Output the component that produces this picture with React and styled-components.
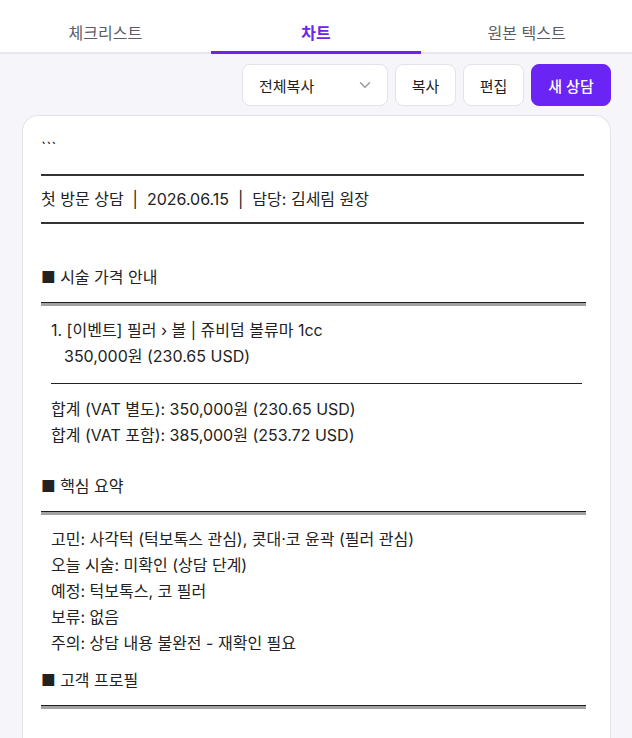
import React from 'react';
import styled, { createGlobalStyle } from 'styled-components';
import { ChevronDown } from 'lucide-react';

const GlobalStyle = createGlobalStyle`
  * { box-sizing: border-box; }
  body {
    margin: 0;
    background: #f6f6fa;
    font-family: Inter, "Noto Sans CJK KR", "Noto Sans", sans-serif;
    color: #222;
  }
`;

const tabs = ['체크리스트', '차트', '원본 텍스트'];

const summary = [
  '고민: 사각턱 (턱보톡스 관심), 콧대·코 윤곽 (필러 관심)',
  '오늘 시술: 미확인 (상담 단계)',
  '예정: 턱보톡스, 코 필러',
  '보류: 없음',
  '주의: 상담 내용 불완전 - 재확인 필요',
];

const App = () => {
  return (
    <Page>
      <GlobalStyle />
      <TabBar>
        {tabs.map((t) => (
          <Tab key={t} active={t === '차트'}>{t}</Tab>
        ))}
      </TabBar>

      <Toolbar>
        <Select>
          <span>전체복사</span>
          <ChevronDown size={18} color="#9a9aa4" strokeWidth={2} />
        </Select>
        <Button w={61}>복사</Button>
        <Button w={61}>편집</Button>
        <Button w={80} primary>새 상담</Button>
      </Toolbar>

      <Card>
        <Line>```</Line>
        <Rule top={13} bottom={10} />
        <Line>첫 방문 상담 &nbsp;|&nbsp; 2026.06.15 &nbsp;|&nbsp; 담당: 김세림 원장</Line>
        <Rule top={10} bottom={40} />

        <Heading>■ 시술 가격 안내</Heading>
        <DoubleRule />
        <Indent>
          <Line>1. [이벤트] 필러 › 볼 | 쥬비덤 볼류마 1cc</Line>
          <SubLine>350,000원 (230.65 USD)</SubLine>
          <ThinRule />
          <Line>합계 (VAT 별도): 350,000원 (230.65 USD)</Line>
          <Line>합계 (VAT 포함): 385,000원 (253.72 USD)</Line>
        </Indent>

        <Heading gap={25}>■ 핵심 요약</Heading>
        <DoubleRule />
        <Indent>
          {summary.map((s) => (
            <Line key={s}>{s}</Line>
          ))}
        </Indent>

        <Heading gap={11}>■ 고객 프로필</Heading>
        <DoubleRule />
      </Card>
    </Page>
  );
};

export default App;

const Page = styled.div`
  min-height: 100vh;
  background: #f6f6fa;
`;

const TabBar = styled.div`
  display: grid;
  grid-template-columns: repeat(3, 1fr);
  background: #fff;
  border-bottom: 2px solid #e6e6ee;
`;

const Tab = styled.div`
  height: 52px;
  display: flex;
  align-items: center;
  justify-content: center;
  padding-top: 11px;
  font-size: 16px;
  font-weight: ${(p) => (p.active ? 600 : 400)};
  color: ${(p) => (p.active ? '#6b24f0' : '#5c5c66')};
  position: relative;

  &::after {
    content: '';
    display: ${(p) => (p.active ? 'block' : 'none')};
    position: absolute;
    left: 0;
    right: 0;
    bottom: -2px;
    height: 3px;
    background: #6b24f0;
  }
`;

const Toolbar = styled.div`
  display: flex;
  justify-content: flex-end;
  gap: 7px;
  padding: 10px 21px 9px;
`;

const Select = styled.div`
  width: 146px;
  height: 42px;
  display: flex;
  align-items: center;
  justify-content: space-between;
  padding: 0 13px 0 16px;
  background: #fff;
  border: 1px solid #e2e2ea;
  border-radius: 8px;
  font-size: 15px;
  color: #222;
`;

const Button = styled.div`
  height: 42px;
  width: ${(p) => p.w}px;
  display: flex;
  align-items: center;
  justify-content: center;
  font-size: 15px;
  border-radius: 8px;
  background: ${(p) => (p.primary ? '#6a25f4' : '#fff')};
  color: ${(p) => (p.primary ? '#fff' : '#222')};
  border: 1px solid ${(p) => (p.primary ? '#6a25f4' : '#e2e2ea')};
  font-weight: ${(p) => (p.primary ? 500 : 400)};
`;

const Card = styled.div`
  margin: 0 21px 0 22px;
  background: #fff;
  border: 1px solid #e2e2ea;
  border-bottom: none;
  border-radius: 16px 16px 0 0;
  padding: 19px 24px 60px 18px;
`;

const Line = styled.div`
  font-size: 16px;
  line-height: 26px;
  white-space: pre-wrap;
  color: #222;
`;

const SubLine = styled(Line)`
  padding-left: 13px;
`;

const Heading = styled(Line)`
  margin-top: ${(p) => p.gap || 0}px;
`;

const Rule = styled.div`
  height: 2px;
  margin: ${(p) => p.top}px 2px ${(p) => p.bottom}px 0;
  background: #333;
`;

const DoubleRule = styled.div`
  height: 4px;
  margin: 12px 0 11px;
  border-top: 1.5px solid #1e1e1e;
  background: #a2a2a2;
`;

const ThinRule = styled.div`
  height: 1px;
  margin: 14px 4px 12px 0;
  background: #222;
`;

const Indent = styled.div`
  padding-left: 10px;
`;
